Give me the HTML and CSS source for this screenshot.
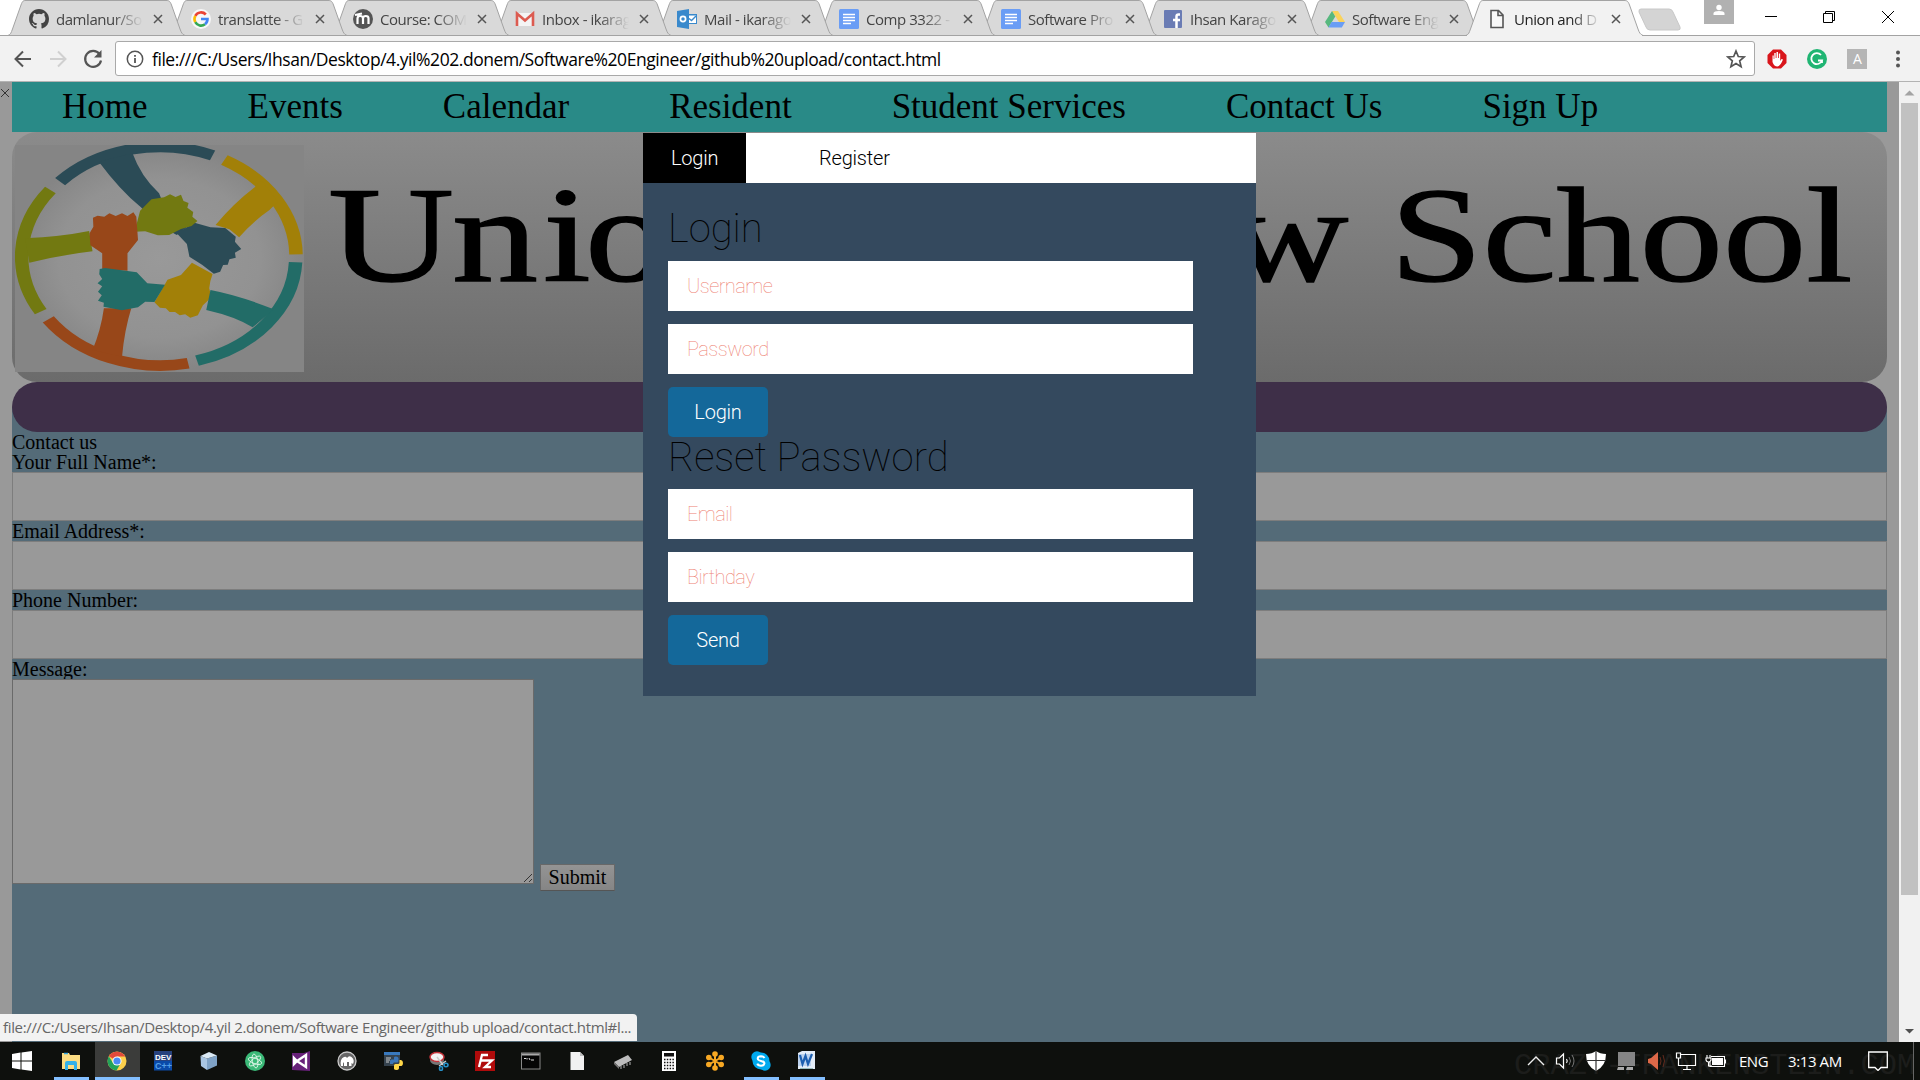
FILE: index.html
```html
<!DOCTYPE html>
<html lang="en">
<head>
<meta charset="utf-8">
<title>Union and D</title>
<link rel="stylesheet" href="styles.css">
</head>
<body>
<svg width="0" height="0" class="defs">
  <symbol id="tabshape" viewBox="0 0 177 36"><path d="M0 35.5C3 34 3 33 4.500 29L13 5C14.500 1 15 .5 18 .5H158C161 .5 162 1 163.500 5L172 29C173.500 33 174 34 177 35.500Z"/></symbol>
  <symbol id="x" viewBox="0 0 10 10"><path d="M1 1L9 9M9 1L1 9" fill="none" stroke="#555" stroke-width="1.500"/></symbol>
  <symbol id="doc" viewBox="0 0 20 20"><rect width="20" height="20" rx="1.500" fill="#6a9df5"/><path d="M4 5.500H16M4 8.500H16M4 11.500H16M4 14.500H12" stroke="#fff" stroke-width="1.500"/></symbol>
</svg>

<div class="tabstrip">
  <div class="tab"><svg class="shape"><use href="#tabshape"/></svg>
    <svg class="fav" viewBox="0 0 16 16"><path fill="#444" d="M8 0C3.580 0 0 3.580 0 8c0 3.540 2.290 6.530 5.470 7.590.4.070.55-.17.55-.38 0-.19-.01-.82-.01-1.490-2.010.37-2.530-.49-2.690-.94-.09-.23-.48-.94-.82-1.130-.28-.15-.68-.52-.01-.53.63-.01 1.080.58 1.230.82.72 1.210 1.870.87 2.330.66.07-.52.28-.87.51-1.070-1.780-.2-3.640-.89-3.640-3.950 0-.87.31-1.590.82-2.150-.08-.2-.36-1.020.08-2.120 0 0 .67-.21 2.200.82a7.600 7.600 0 0 1 4 0c1.530-1.040 2.200-.82 2.200-.82.44 1.100.16 1.920.08 2.120.51.56.82 1.270.82 2.150 0 3.070-1.870 3.750-3.650 3.950.29.25.54.73.54 1.480 0 1.070-.01 1.930-.01 2.200 0 .21.15.46.55.38A8 8 0 0 0 16 8c0-4.420-3.580-8-8-8z"/></svg>
    <span>damlanur/So</span><svg class="cls"><use href="#x"/></svg></div>
  <div class="tab"><svg class="shape"><use href="#tabshape"/></svg>
    <svg class="fav" viewBox="0 0 20 20"><circle cx="10" cy="10" r="10" fill="#f7f7f7"/><g fill="none" stroke-width="2.600"><path d="M14.800 5.500A6.500 6.500 0 0 0 4.300 6.900" stroke="#ea4335"/><path d="M4.300 6.900A6.500 6.500 0 0 0 4.300 13.200" stroke="#fbbc05"/><path d="M4.300 13.200A6.500 6.500 0 0 0 14 15.200" stroke="#34a853"/><path d="M14 15.200A6.500 6.500 0 0 0 16.500 10H10" stroke="#4285f4"/></g></svg>
    <span>translatte - G</span><svg class="cls"><use href="#x"/></svg></div>
  <div class="tab"><svg class="shape"><use href="#tabshape"/></svg>
    <svg class="fav" viewBox="0 0 20 20"><circle cx="10" cy="10" r="10" fill="#555"/><path d="M4.500 15V9.500Q4.500 7 7.200 7T10 9.500V15M10 9.500Q10 7 12.800 7T15.500 9.500V15M2 6L9 4.500" fill="none" stroke="#fff" stroke-width="2.200"/></svg>
    <span>Course: COM</span><svg class="cls"><use href="#x"/></svg></div>
  <div class="tab"><svg class="shape"><use href="#tabshape"/></svg>
    <svg class="fav" viewBox="0 0 20 20"><path d="M2 4H18V17H2Z" fill="#f4f4f4"/><path d="M2 17V4.500L10 11.500L18 4.500V17" fill="none" stroke="#dc5b50" stroke-width="2.600"/></svg>
    <span>Inbox - ikarag</span><svg class="cls"><use href="#x"/></svg></div>
  <div class="tab"><svg class="shape"><use href="#tabshape"/></svg>
    <svg class="fav" viewBox="0 0 20 20"><path d="M0 2L12 0V20L0 18Z" fill="#3989cc"/><circle cx="6" cy="10" r="2.600" fill="none" stroke="#fff" stroke-width="1.700"/><rect x="12" y="5" width="8" height="10" fill="#3989cc"/><path d="M12 6.500H19V14H12Z" fill="#fff"/><path d="M12 9.500L14.500 11.500L19 7" stroke="#3989cc" fill="none" stroke-width="1.400"/></svg>
    <span>Mail - ikarago</span><svg class="cls"><use href="#x"/></svg></div>
  <div class="tab"><svg class="shape"><use href="#tabshape"/></svg><svg class="fav"><use href="#doc"/></svg><span>Comp 3322 -</span><svg class="cls"><use href="#x"/></svg></div>
  <div class="tab"><svg class="shape"><use href="#tabshape"/></svg><svg class="fav"><use href="#doc"/></svg><span>Software Pro</span><svg class="cls"><use href="#x"/></svg></div>
  <div class="tab"><svg class="shape"><use href="#tabshape"/></svg>
    <svg class="fav" viewBox="0 0 20 20"><rect x="1" y="1" width="18" height="18" rx="1" fill="#6a7cb4"/><path d="M17 5.500H15.500Q13.500 5.500 13.500 7.500V19M10 11H17" fill="none" stroke="#fff" stroke-width="2.500"/></svg>
    <span>Ihsan Karago</span><svg class="cls"><use href="#x"/></svg></div>
  <div class="tab"><svg class="shape"><use href="#tabshape"/></svg>
    <svg class="fav" viewBox="0 0 20 20"><path d="M7 2H13L20 13H14Z" fill="#fad35b"/><path d="M7 2L10.300 7.500L3.500 18.500L0 13Z" fill="#57b87e"/><path d="M6.500 13H20L16.800 18.500H3.500Z" fill="#6a9df5"/></svg>
    <span>Software Eng</span><svg class="cls"><use href="#x"/></svg></div>
  <div class="tab active"><svg class="shape"><use href="#tabshape"/></svg>
    <svg class="fav" viewBox="0 0 20 20"><path d="M4 1.500H11.500L16 6V18.500H4ZM11 1.500V6.500H16" fill="#f8f8f8" stroke="#555" stroke-width="1.600"/></svg>
    <span>Union and D</span><svg class="cls"><use href="#x"/></svg></div>
  <svg class="newtab" viewBox="0 0 44 24"><path d="M3 1H31Q34 1 35 4L42 19Q43 22 40 22H12Q9 22 8 19L1 4Q.5 1 3 1Z" fill="#d4d4d4" stroke="#c8c8c8"/></svg>
  <div class="wincontrols">
    <svg class="user" viewBox="0 0 30 24"><rect width="30" height="24" fill="#b1b1b1"/><circle cx="15" cy="7.500" r="2.700" fill="#fff"/><path d="M9.500 15V13Q10 11 15 11T20.500 13V15Z" fill="#fff"/></svg>
    <svg class="wc" viewBox="0 0 14 14"><path d="M1 6.500H13" stroke="#000"/></svg>
    <svg class="wc" viewBox="0 0 14 14"><path d="M.5 3.500H9.500V12.500H.5ZM2.500 3.500V1.500H11.500V10.500H9.500" stroke="#000" fill="none"/></svg>
    <svg class="wc" viewBox="0 0 14 14"><path d="M1 1L13 13M13 1L1 13" stroke="#000" fill="none"/></svg>
  </div>
</div>

<div class="toolbar">
  <svg class="tb" viewBox="0 0 20 20"><path d="M18 10H3M10 2.500L2.500 10L10 17.500" fill="none" stroke="#555" stroke-width="2"/></svg>
  <svg class="tb" viewBox="0 0 20 20"><path d="M2 10H17M10 2.500L17.500 10L10 17.500" fill="none" stroke="#d0d0d0" stroke-width="2"/></svg>
  <svg class="tb" viewBox="0 0 20 20"><path d="M16.500 5A8 8 0 1 0 18 11.500" fill="none" stroke="#555" stroke-width="2.200"/><path d="M18.500 1V8.500H11Z" fill="#555"/></svg>
  <div class="omnibox">
    <svg class="info" viewBox="0 0 18 18"><circle cx="9" cy="9" r="7.700" fill="none" stroke="#555" stroke-width="1.500"/><path d="M9 8V13M9 5V6.800" stroke="#555" stroke-width="1.800"/></svg>
    <span class="url">file:///C:/Users/Ihsan/Desktop/4.yil%202.donem/Software%20Engineer/github%20upload/contact.html</span>
    <svg class="star" viewBox="0 0 20 20"><path d="M10 2L12.300 7.500L18.200 8L13.700 11.900L15.100 17.700L10 14.600L4.900 17.700L6.300 11.900L1.800 8L7.700 7.500Z" fill="none" stroke="#555" stroke-width="1.700"/></svg>
  </div>
  <svg class="ext" viewBox="0 0 20 20"><path d="M6 .5H14L19.500 6V14L14 19.500H6L.5 14V6Z" fill="#d9151b"/><path d="M5.500 9V13Q7 17.500 10.500 17.500Q13.500 17 16 10.500L14.500 10L13.200 12V4.500H11.800V9H11V3H9.500V9H8.700V4H7.300V10H6.700V6.500H5.500Z" fill="#fff"/></svg>
  <svg class="ext" viewBox="0 0 20 20"><circle cx="10" cy="10" r="10" fill="#20b573"/><path d="M14 6A5.500 5.500 0 1 0 15 11.500H11M15 11V14" fill="none" stroke="#fff" stroke-width="1.800"/></svg>
  <div class="ext abox">A</div>
  <svg class="ext" viewBox="0 0 20 20"><g fill="#555"><circle cx="10" cy="3.500" r="2"/><circle cx="10" cy="10" r="2"/><circle cx="10" cy="16.500" r="2"/></g></svg>
</div>

<div class="viewport">
  <div class="gutter"><svg viewBox="0 0 10 10"><path d="M1 1L9 9M9 1L1 9" fill="none" stroke="#333"/></svg></div>
  <main>
    <nav><a>Home</a><a>Events</a><a>Calendar</a><a>Resident</a><a>Student Services</a><a>Contact Us</a><a>Sign Up</a></nav>
    <header>
      <svg class="logo" viewBox="36 45 686 681" preserveAspectRatio="none">
        <defs><radialGradient id="lg"><stop offset="0" stop-color="#999"/><stop offset=".7" stop-color="#929292"/><stop offset="1" stop-color="#858585"/></radialGradient></defs>
        <rect x="36" y="45" width="686" height="681" fill="url(#lg)"/>
        <g fill="none" stroke-width="32">
          <path d="M143 155A322 322 0 0 1 505 76" stroke="#2b4b56"/>
          <path d="M533 90A330 330 0 0 1 703 373" stroke="#a28008"/>
          <path d="M702 397A322 322 0 0 1 468 692" stroke="#226c67"/>
          <path d="M447 700A326 326 0 0 1 115 568" stroke="#984719"/>
          <path d="M97 545A326 326 0 0 1 120 180" stroke="#727911"/>
        </g>
        <path d="M235 95L315 70Q335 140 378 190L400 260L445 290L420 315L370 280L335 232Q285 180 235 95Z" fill="#2b4b56"/>
        <path d="M420 310L462 278L500 292L535 294L560 320L558 335L573 357L558 368L560 383L545 388L541 404L530 405L523 425L508 431L480 404L450 380L444 342Z" fill="#2b4b56"/>
        <path d="M620 150L660 215L640 240Q600 275 568 322L545 298L512 285Q555 220 605 172Z" fill="#a28008"/>
        <path d="M456 398L505 432Q498 455 497 475L502 500L491 515L482 526L470 556L452 563L440 553L427 556L416 546L403 546L394 535L380 533L367 517L398 449L430 435Z" fill="#a28008"/>
        <path d="M60 325Q145 320 212 303L220 364Q145 375 70 398Z" fill="#727911"/>
        <path d="M320 305L333 242L360 208L390 202L404 193L417 201L430 194L436 213L448 219L445 233L459 246L457 260L469 273L455 288L430 297L402 315L375 316L345 304Z" fill="#727911"/>
        <path d="M221 263L232 257L248 260L260 250L275 258L290 250L303 258L317 247L324 260L328 330L303 370L303 422L243 418V370L215 346L213 310L222 290Z" fill="#984719"/>
        <path d="M247 535H312Q296 600 290 680L220 660Q240 600 247 535Z" fill="#984719"/>
        <path d="M500 480Q570 497 650 538L600 592Q560 560 490 540Z" fill="#226c67"/>
        <path d="M237 417L250 414L325 427L350 460L392 464L367 516L345 515L328 532L290 541L246 530L247 518L233 512L242 496L233 485L243 469L232 460L243 447L236 433Z" fill="#226c67"/>
      </svg>
      <svg class="banner" viewBox="0 0 1567 250">
        <g class="bannertext">
          <text transform="translate(8 149) scale(1.280 1)">U</text>
          <text transform="translate(132 149) scale(1.260 1)">n</text>
          <text transform="translate(223 149) scale(1.260 1)">i</text>
          <text transform="translate(265 149) scale(1.220 1)">o</text>
          <text transform="translate(908 149) scale(1.220 1)">w School</text>
        </g>
      </svg>
    </header>
    <div class="barwrap"><div class="bar"></div></div>
    <form class="contact">
      <div class="line">Contact us</div>
      <div class="line">Your Full Name*:</div><div class="field"></div>
      <div class="line">Email Address*:</div><div class="field"></div>
      <div class="line">Phone Number:</div><div class="field"></div>
      <div class="line">Message:</div>
      <div class="msgrow"><div class="area"><svg viewBox="0 0 10 10"><path d="M1 9L9 1M6 9L9 6" stroke="#333" fill="none"/></svg></div><div class="submit">Submit</div></div>
    </form>
  </main>
  <div class="scroll">
    <svg viewBox="0 0 21 21"><path d="M5.500 13.500L10.500 8.500L15.500 13.500Z" fill="#a3a3a3"/></svg>
    <div class="thumb"></div>
    <svg viewBox="0 0 21 21"><path d="M6 8L10.500 12.500L15 8Z" fill="#505050"/></svg>
  </div>

  <section class="modal">
    <div class="mtabs"><div class="mtab on">Login</div><div class="mtab reg">Register</div></div>
    <div class="panel">
      <h1>Login</h1>
      <div class="inp">Username</div>
      <div class="inp">Password</div>
      <div class="btn">Login</div>
      <h1 class="second">Reset Password</h1>
      <div class="inp">Email</div>
      <div class="inp">Birthday</div>
      <div class="btn">Send</div>
    </div>
  </section>
  <div class="status"><span>file:///C:/Users/Ihsan/Desktop/4.yil 2.donem/Software Engineer/github upload/contact.html#l...</span></div>
</div>

<footer class="taskbar">
  <div class="slot start"><svg viewBox="0 0 20 20"><path d="M0 3L8.500 1.600V9.500H0ZM9.500 1.400L20 0V9.500H9.500ZM0 10.500H8.500V18.400L0 17ZM9.500 10.500H20V20L9.500 18.600Z" fill="#fff"/></svg></div>
  <div class="slot run"><svg viewBox="0 0 20 20"><path d="M1 2H8L9 4H19V18H1Z" fill="#fbdc82"/><path d="M3 2.500H7" stroke="#3aa7dc" stroke-width="1.500"/><path d="M4 19V12Q4 10 6 10H14Q16 10 16 12V19H13V14H7V19Z" fill="#32b1e8"/></svg></div>
  <div class="slot run sel"><svg viewBox="0 0 20 20"><circle cx="10" cy="10" r="9.500" fill="#fdd04b"/><path d="M10 10L1.800 5.200A9.500 9.500 0 0 1 18.200 5.500H10Z" fill="#e2493b"/><path d="M10 10L6 12L1.800 5.200A9.500 9.500 0 0 0 9.500 19.500L13.800 12Z" fill="#22a35a"/><circle cx="10" cy="10" r="4.600" fill="#fff"/><circle cx="10" cy="10" r="3.600" fill="#4a8af4"/></svg></div>
  <div class="slot"><svg viewBox="0 0 20 20"><rect x="1" width="18" height="10" fill="#27427e"/><rect x="1" y="10" width="18" height="9.500" fill="#0a4aa8"/><text x="2" y="8.500" class="dev">DEV</text><text x="2" y="18" class="cpp">C++</text></svg></div>
  <div class="slot"><svg viewBox="0 0 20 20"><path d="M1.500 5L8 7.500V19L2 15Z" fill="#a9c6e3"/><path d="M8 7.500L18 4.500V14.500L8 19Z" fill="#7ea2c6"/><path d="M1.500 5L10 1L18 4.500L8 7.500Z" fill="#dbeaf5"/></svg></div>
  <div class="slot"><svg viewBox="0 0 20 20"><circle cx="10" cy="10" r="10" fill="#3bb977"/><g fill="none" stroke="#e2f7ea" stroke-width=".9"><ellipse cx="10" cy="10" rx="7" ry="2.700" transform="rotate(20 10 10)"/><ellipse cx="10" cy="10" rx="7" ry="2.700" transform="rotate(80 10 10)"/><ellipse cx="10" cy="10" rx="7" ry="2.700" transform="rotate(140 10 10)"/></g></svg></div>
  <div class="slot"><svg viewBox="0 0 20 20"><path d="M1 2H13L19 0V20L1 19Z" fill="#68217a"/><path d="M3 7L6 10L3 13ZM6 10L15 4V16Z" fill="none" stroke="#fff" stroke-width="2.400"/></svg></div>
  <div class="slot"><svg viewBox="0 0 20 20"><circle cx="10" cy="10" r="9" fill="#666" stroke="#ccc" stroke-width="1.300"/><path d="M4 15Q2.500 8 7 6Q9 5 10 7Q12 4 14.500 6Q18 9 16 13L14.500 12V15H12V11H10V15H7V11Q5.500 12 6 15Z" fill="#fff"/></svg></div>
  <div class="slot"><svg viewBox="0 0 20 20"><path d="M1 1H17V15H1Z" fill="#35424d"/><path d="M1 1H17V4H1Z" fill="#3979bd"/><path d="M3 7H8M3 9H7M3 11H6" stroke="#ccc"/><path d="M7 13V10Q7 8.500 8.500 8.500H11V6.500Q11 5.500 13 5.500T15.500 7V10Q15.500 11.500 14 11.500H11Q10 11.500 10 13Z" fill="#3b76b8"/><path d="M11 18V14.500Q11 13 12.500 13H15Q16.500 13 16.500 11.500V9H18Q20 9.500 20 12T18.500 15H16V17.500Q15.500 19 13.500 19T11 18Z" fill="#ffd748"/></svg></div>
  <div class="slot"><svg viewBox="0 0 20 20"><ellipse cx="8" cy="9" rx="7" ry="5" fill="#777"/><ellipse cx="8" cy="6" rx="7" ry="4.500" fill="#f2f2f2" stroke="#c5333a" stroke-width="1.500"/><path d="M8 6L14 14M17 10L10 15" stroke="#ccc" stroke-width="1.500"/><g fill="none" stroke="#2591c9" stroke-width="1.600"><ellipse cx="17" cy="14" rx="2" ry="1.700"/><ellipse cx="12" cy="17.500" rx="1.500" ry="2"/></g></svg></div>
  <div class="slot"><svg viewBox="0 0 20 20"><rect width="20" height="20" fill="#b00b0b"/><path d="M4 16L7 4H13M5.500 9.500H11M10 9.500H17L10 16H16" fill="none" stroke="#fff" stroke-width="2.300"/></svg></div>
  <div class="slot"><svg viewBox="0 0 20 20"><rect x=".5" y="2" width="18.500" height="16" fill="#050505" stroke="#888"/><path d="M1 3.500H18.500" stroke="#aaa" stroke-width="2"/><path d="M3 7.500H5M6 7V8.500M8 7L9 9M10 9H13" stroke="#ddd"/></svg></div>
  <div class="slot"><svg viewBox="0 0 20 20"><path d="M3.500 1H13L17 5V19H3.500Z" fill="#f1f1f1"/><path d="M13 1V5H17Z" fill="#bbb"/></svg></div>
  <div class="slot"><svg viewBox="0 0 20 20"><path d="M1 11L15 4L19 9L6 16Z" fill="#bdbdbd"/><path d="M1 11L6 16V18L1 13Z" fill="#777"/><path d="M8 15V18M11 14V17M14 12V15M17 11V14" stroke="#999" stroke-width="1.200"/></svg></div>
  <div class="slot"><svg viewBox="0 0 20 20"><rect x="3" width="14" height="20" fill="#fff"/><rect x="5" y="2" width="10" height="3.500" fill="#111"/><path d="M5 8.500H15M5 11.500H15M5 14.500H15M5 17.500H15" stroke="#111" stroke-width="1.500" stroke-dasharray="1.500 1.300"/></svg></div>
  <div class="slot"><svg viewBox="0 0 20 20"><g fill="#f7a823" stroke="#f7a823" stroke-width="2"><path d="M10 3V17M4 6.500L16 13.500M16 6.500L4 13.500"/><g stroke="none"><circle cx="10" cy="3" r="2.800"/><circle cx="10" cy="17" r="2.800"/><circle cx="3.800" cy="6.500" r="2.800"/><circle cx="16.200" cy="6.500" r="2.800"/><circle cx="3.800" cy="13.500" r="2.800"/><circle cx="16.200" cy="13.500" r="2.800"/></g></g></svg></div>
  <div class="slot run"><svg viewBox="0 0 20 20"><g fill="#00a9ee"><circle cx="6" cy="6" r="5.700"/><circle cx="14" cy="14" r="5.700"/><circle cx="10" cy="10" r="8.500"/></g><path d="M13.500 7Q12.500 5.300 10 5.300Q6.800 5.400 6.700 7.500Q6.800 9.300 10 9.900Q13.500 10.600 13.400 12.500Q13 14.700 10 14.700Q7 14.600 6.300 12.600" fill="none" stroke="#fff" stroke-width="2"/></svg></div>
  <div class="slot run"><svg viewBox="0 0 20 20"><path d="M1 2L5 0H18V18H1Z" fill="#e4edf8"/><path d="M1 3H14V15H1Z" fill="#bcd2ee"/><path d="M3 4L5.500 13L8.500 5L11 13L15 3" fill="none" stroke="#1d5fb0" stroke-width="2.200"/><path d="M3 17.500H16" stroke="#9bb" /></svg></div>
  <div class="tray">
    <div class="wall">CRAZY-FRANKENSTEIN.COM</div>
    <svg class="t1" viewBox="0 0 20 20"><path d="M2 14L10 6L18 14" fill="none" stroke="#eee" stroke-width="1.400"/></svg>
    <svg class="t2" viewBox="0 0 22 20"><path d="M1.500 7H4.500L8.500 3V17L4.500 13H1.500ZM11.500 8Q13 10 11.500 12" fill="none" stroke="#fff" stroke-width="1.200"/><path d="M14 6Q17 10 14 14M17 4Q21 10 17 16" fill="none" stroke="#777"/></svg>
    <svg class="t3" viewBox="0 0 20 20"><path d="M10 0Q14 3 20 3Q20 15 10 20Q0 15 0 3Q6 3 10 0Z" fill="#fff"/><path d="M10 0V20M0 9.500H20" stroke="#333" stroke-width="1.200"/></svg>
    <svg class="t4" viewBox="0 0 20 20"><rect x="2" y="1" width="17" height="14" fill="#858585"/><path d="M2 16H8V19H1ZM11 16H17V19H10Z" fill="#aaa"/></svg>
    <svg class="t5" viewBox="0 0 20 20"><path d="M2 8L5 7L12 1V19L5 13L2 12Z" fill="#dd6848"/><path d="M14 6Q16 10 14 14M17 4Q20 10 17 16" fill="none" stroke="#642b1d"/></svg>
    <svg class="t6" viewBox="0 0 22 20"><path d="M5 3.500H20.500V14.500H3.500V9M12 14.500V18M8 18.500H16M1.500 2V7H5.500V2ZM3.500 7V10" fill="none" stroke="#fff" stroke-width="1.200"/></svg>
    <svg class="t7" viewBox="0 0 22 20"><path d="M6 5.500H19.500V15.500H5V10M1 7H6V9Q5.500 11 3.500 11T1 9ZM2 7V4M5 7V4M3.500 11V15H7M20.500 8.500V12.500" fill="none" stroke="#fff" stroke-width="1.100"/><path d="M7 7H18V14H7Z" fill="#fff"/></svg>
    <span class="lang">ENG</span><span class="time">3:13 AM</span>
    <svg class="t8" viewBox="0 0 20 20"><path d="M.7 1H19.300V16.500H13L10 19.500L7 16.500H.7Z" fill="none" stroke="#fff" stroke-width="1.300"/></svg>
    <div class="peek"></div>
  </div>
</footer>
</body>
</html>
```
FILE: styles.css
```css
* { box-sizing: border-box; }
body { margin: 0; width: 1920px; height: 1080px; overflow: hidden; display: flex; flex-direction: column; background: #fff; font-family: "Open Sans", "Noto Sans", sans-serif; }
svg { display: block; flex: none; }
.defs { position: absolute; }

.tabstrip { height: 36px; flex: none; display: flex; padding-left: 8px; border-bottom: 1px solid #a3a3a3; position: relative; z-index: 0; }
.tab { position: relative; width: 177px; height: 36px; margin-right: -15px; display: flex; align-items: center; padding: 2px 0 0 21px; flex: none; }
.tab:nth-child(1) { z-index: 10; } .tab:nth-child(2) { z-index: 9; } .tab:nth-child(3) { z-index: 8; } .tab:nth-child(4) { z-index: 7; } .tab:nth-child(5) { z-index: 6; }
.tab:nth-child(6) { z-index: 5; } .tab:nth-child(7) { z-index: 4; } .tab:nth-child(8) { z-index: 3; } .tab:nth-child(9) { z-index: 2; }
.tab.active { z-index: 20; margin-right: 0; }
.shape { position: absolute; left: 0; top: 0; width: 177px; height: 36px; z-index: -1; fill: #d9d9d9; stroke: #a3a3a3; }
.active .shape { fill: #f2f2f2; }
.active::after { content: ""; position: absolute; left: 1px; right: 1px; bottom: 0; height: 1px; background: #f2f2f2; }
.fav { width: 20px; height: 20px; }
.tab span { width: 87px; margin-left: 7px; height: 22px; line-height: 22px; font-size: 15px; letter-spacing: -.45px; overflow: hidden; white-space: nowrap; color: #444; -webkit-mask-image: linear-gradient(90deg, #000 65%, transparent); mask-image: linear-gradient(90deg, #000 65%, transparent); }
.active span { color: #222; }
.cls { width: 10px; height: 10px; margin-left: 10px; }
.newtab { width: 44px; height: 24px; margin: 8px 0 0 -5px; }
.wincontrols { display: flex; margin-left: auto; padding-right: 25px; gap: 44.500px; }
.user { width: 30px; height: 24px; margin-right: -14px; }
.wc { width: 14px; height: 14px; margin-top: 10px; }

.toolbar { height: 46px; flex: none; background: #f2f2f2; border-bottom: 1px solid #b3b3b3; display: flex; align-items: center; padding-left: 13px; overflow: hidden; }
.tb { width: 20px; height: 20px; margin-right: 15px; }
.omnibox { flex: none; width: 1640px; height: 35px; margin-left: -3px; border: 1px solid #a9a9a9; border-radius: 3px; background: #fff; display: flex; align-items: center; padding: 0 8px 0 10px; margin-right: 12px; }
.info { width: 18px; height: 18px; margin-right: 8px; }
.url { font-size: 17.500px; letter-spacing: -.45px; line-height: 30px; color: #000; white-space: nowrap; }
.star { width: 20px; height: 20px; margin-left: auto; }
.ext { width: 20px; height: 20px; margin-right: 20.200px; flex: none; }
.abox { background: #b5b5b5; color: #fff; font-size: 14px; line-height: 20px; text-align: center; }

.viewport { position: relative; height: 960px; flex: none; display: flex; background: #999; overflow: hidden; }
.gutter { width: 12px; padding-top: 6px; }
.gutter svg { width: 10px; height: 10px; }
main { width: 1875px; display: flex; flex-direction: column; font-family: "Liberation Serif", serif; color: #000; }
nav { height: 50px; background: #298a87; display: flex; font-size: 35px; line-height: 50px; flex: none; }
nav a { padding: 0 50px; white-space: nowrap; }
header { height: 250px; flex: none; border-radius: 25px; background: linear-gradient(#8b8b8b, #6b6b6b); display: flex; }
.logo { width: 289px; height: 227px; margin: 13px 16px 0 3px; }
.banner { width: 1567px; height: 250px; }
.bannertext { font-family: "Liberation Serif", serif; font-size: 136.500px; fill: #000; stroke: #000; stroke-width: 1.400px; }
.barwrap { height: 50px; flex: none; background: linear-gradient(#999 50%, #546b78 50%); }
.bar { height: 50px; border-radius: 25px; background: #3e2f48; }
.contact { flex: 1; background: #546b78; font-size: 20px; }
.line { height: 20px; line-height: 21px; }
.field { height: 49px; background: #999; border: 1px solid #7d7d7d; }
.msgrow { display: flex; align-items: flex-end; gap: 6px; height: 212px; }
.area { width: 522px; height: 205px; align-self: flex-start; background: #999; border: 1px solid #6a6a6a; display: flex; justify-content: flex-end; align-items: flex-end; }
.area svg { width: 10px; height: 10px; }
.submit { width: 75px; height: 27px; border: 1px solid #686868; border-bottom-color: #555; background: linear-gradient(#949494, #858585); line-height: 25px; text-align: center; }
.scroll { width: 21px; margin-left: 12px; background: #f1f1f1; display: flex; flex-direction: column; align-items: center; }
.scroll svg { width: 21px; height: 21px; }
.thumb { width: 17px; height: 792px; background: #c1c1c1; }
.scroll svg:last-child { margin-top: auto; }

.modal { position: absolute; left: 643px; top: 51px; width: 613px; height: 563px; background: #34495e; font-family: Roboto, sans-serif; font-weight: 300; font-size: 20px; }
.mtabs { height: 50px; background: #fff; display: flex; line-height: 50px; }
.mtab { width: 103px; padding-left: 28px; letter-spacing: -.2px; color: #000; }
.mtab.on { background: #000; color: #fff; }
.mtab.reg { width: 127px; margin-left: 45px; }
.panel { padding: 25px; }
h1 { margin: 0 0 13px; font-size: 40px; height: 40px; line-height: 42px; font-weight: 100; color: #000; }
.second { margin-bottom: 12px; }
.inp { width: 525px; height: 50px; margin-bottom: 13px; padding-left: 19px; background: #fff; color: #ee7f73; font-weight: 100; letter-spacing: -.55px; line-height: 50px; }
.btn { width: 100px; height: 50px; border-radius: 5px; background: #14689a; color: #fff; text-align: center; letter-spacing: -.2px; line-height: 50px; }
.status { position: absolute; left: 0; top: 932px; width: 637px; height: 27px; background: #f2f2f2; border-radius: 0 4px 0 0; padding-left: 3px; font-size: 15px; letter-spacing: -.35px; line-height: 27px; color: #666; white-space: nowrap; }

.taskbar { height: 38px; flex: none; background: #0e100d; display: flex; }
.slot { width: 46px; height: 38px; display: flex; align-items: center; justify-content: center; position: relative; flex: none; }
.slot svg { width: 20px; height: 20px; }
.start { width: 48px; padding-right: 4px; }
.run::after { content: ""; position: absolute; bottom: 0; left: 6px; width: 35px; height: 3px; background: #83bfff; }
.sel { background: linear-gradient(90deg, transparent 1px, #3b3c3a 1px); }
.sel::after { left: 1px; width: 45px; }
.dev { font: bold 8px "Liberation Sans", sans-serif; fill: #fff; }
.cpp { font: bold 9px "Liberation Sans", sans-serif; fill: #54a0e8; }
.tray { margin-left: auto; width: 394px; display: flex; align-items: center; position: relative; color: #fff; font-size: 15px; z-index: 0; }
.tray svg { width: 20px; height: 20px; }
.wall { position: absolute; left: -12px; top: 12px; z-index: -1; font: 30.400px/24px "Liberation Mono", monospace; color: #1c1d1b; white-space: nowrap; }
.tray .t2, .tray .t6, .tray .t7 { width: 22px; }
.t2 { margin-left: 9px; } .t3 { margin-left: 9px; } .t4 { margin-left: 10px; } .t5 { margin-left: 10px; } .t6 { margin-left: 9px; } .t7 { margin-left: 8px; }
.lang { margin-left: 12px; width: 49px; letter-spacing: -.5px; }
.time { width: 80px; letter-spacing: -.4px; white-space: nowrap; }
.peek { width: 1px; height: 38px; background: #666; margin-left: 25px; }
```
